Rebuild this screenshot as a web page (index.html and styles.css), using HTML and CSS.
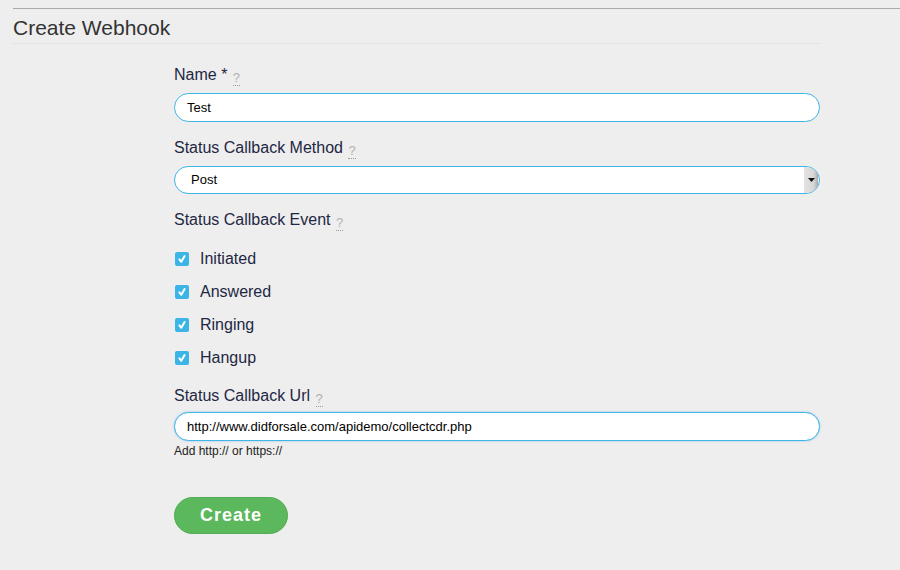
FILE: index.html
```html
<!DOCTYPE html>
<html>
<head>
<meta charset="utf-8">
<link rel="stylesheet" href="styles.css">
</head>
<body>
<div class="page">
  <div class="title">Create Webhook</div>
  <form class="form">
    <div class="label">Name * <span class="hint">?</span></div>
    <div class="input">Test</div>

    <div class="label gap">Status Callback Method <span class="hint">?</span></div>
    <div class="select">
      <span class="select-text">Post</span>
      <span class="select-btn"><svg width="7" height="4" viewBox="0 0 7 4"><path d="M0 0h7L3.5 4z" fill="#111"/></svg></span>
    </div>

    <div class="label gap">Status Callback Event <span class="hint">?</span></div>
    <div class="checks">
      <div class="check"><span class="box"><svg width="10" height="10" viewBox="0 0 10 10"><path d="M2.4 5.4 4.3 7.8 7.6 2" fill="none" stroke="#fff" stroke-width="2" stroke-linecap="round" stroke-linejoin="round"/></svg></span>Initiated</div>
      <div class="check"><span class="box"><svg width="10" height="10" viewBox="0 0 10 10"><path d="M2.4 5.4 4.3 7.8 7.6 2" fill="none" stroke="#fff" stroke-width="2" stroke-linecap="round" stroke-linejoin="round"/></svg></span>Answered</div>
      <div class="check"><span class="box"><svg width="10" height="10" viewBox="0 0 10 10"><path d="M2.4 5.4 4.3 7.8 7.6 2" fill="none" stroke="#fff" stroke-width="2" stroke-linecap="round" stroke-linejoin="round"/></svg></span>Ringing</div>
      <div class="check"><span class="box"><svg width="10" height="10" viewBox="0 0 10 10"><path d="M2.4 5.4 4.3 7.8 7.6 2" fill="none" stroke="#fff" stroke-width="2" stroke-linecap="round" stroke-linejoin="round"/></svg></span>Hangup</div>
    </div>

    <div class="label gap-sm">Status Callback Url <span class="hint">?</span></div>
    <div class="input url">http://www.didforsale.com/apidemo/collectcdr.php</div>
    <div class="help">Add http:// or https://</div>

    <div class="btn">Create</div>
  </form>
</div>
</body>
</html>
```

FILE: styles.css
```css
html, body {
  margin: 0;
  padding: 0;
  background: #eeeeee;
}
body {
  font-family: "Liberation Sans", Arial, Helvetica, sans-serif;
  height: 570px;
  overflow: hidden;
}
.page {
  margin-top: 8px;
  margin-left: 13px;
  border-top: 1px solid #aaaaaa;
}
.title {
  width: 807px;
  font-size: 21px;
  line-height: 24px;
  color: #333333;
  padding-top: 7px;
  padding-bottom: 3px;
  border-bottom: 1px solid #e2e2e2;
}
.form {
  display: flex;
  flex-direction: column;
  margin-left: 161px;
  width: 646px;
  margin-top: 21px;
}
.label {
  font-size: 16px;
  line-height: 20px;
  height: 20px;
  color: #1e2743;
  margin-bottom: 8px;
}
.label.gap { margin-top: 16px; }
.label.gap-sm { margin-top: 12px; margin-bottom: 6px; }
.hint {
  display: inline-block;
  font-size: 13px;
  line-height: 14px;
  color: #b0b0b0;
  border-bottom: 1px dotted #999;
  margin-left: 1px;
  position: relative;
  top: 2px;
}
.input {
  box-sizing: border-box;
  height: 29px;
  border: 1px solid #3fb4e6;
  border-radius: 15px;
  background: #fff;
  font-size: 13px;
  line-height: 27px;
  color: #000;
  padding-left: 12px;
}
.input.url {
  box-shadow: 0 0 2px rgba(80, 160, 230, 0.6);
}
.select {
  box-sizing: border-box;
  height: 28px;
  border: 1px solid #3fb4e6;
  border-radius: 14px;
  background: #fff;
  display: flex;
  align-items: stretch;
  overflow: hidden;
}
.select-text {
  flex: 1;
  font-size: 13px;
  line-height: 26px;
  color: #000;
  padding-left: 16px;
}
.select-btn {
  width: 14px;
  margin-right: 1px;
  background: linear-gradient(to right, #e4e4e4, #d6d6d6 70%, #a8a8a8);
  display: flex;
  align-items: center;
  justify-content: center;
}
.checks {
  display: flex;
  flex-direction: column;
  margin-top: 4px;
}
.check {
  height: 33px;
  display: flex;
  align-items: center;
  font-size: 16px;
  color: #1e2743;
}
.box {
  width: 14px;
  height: 14px;
  border-radius: 2px;
  background: #3bb4e6;
  margin-left: 1px;
  margin-right: 11px;
  display: flex;
  align-items: center;
  justify-content: center;
}
.help {
  font-size: 12px;
  line-height: 14px;
  color: #222;
  margin-top: 3px;
}
.btn {
  box-sizing: border-box;
  margin-top: 39px;
  width: 114px;
  height: 37px;
  border-radius: 19px;
  background: #5cb85c;
  border: 1px solid #53ad53;
  color: #fff;
  font-weight: bold;
  font-size: 18px;
  letter-spacing: 1px;
  line-height: 35px;
  text-align: center;
}
```
